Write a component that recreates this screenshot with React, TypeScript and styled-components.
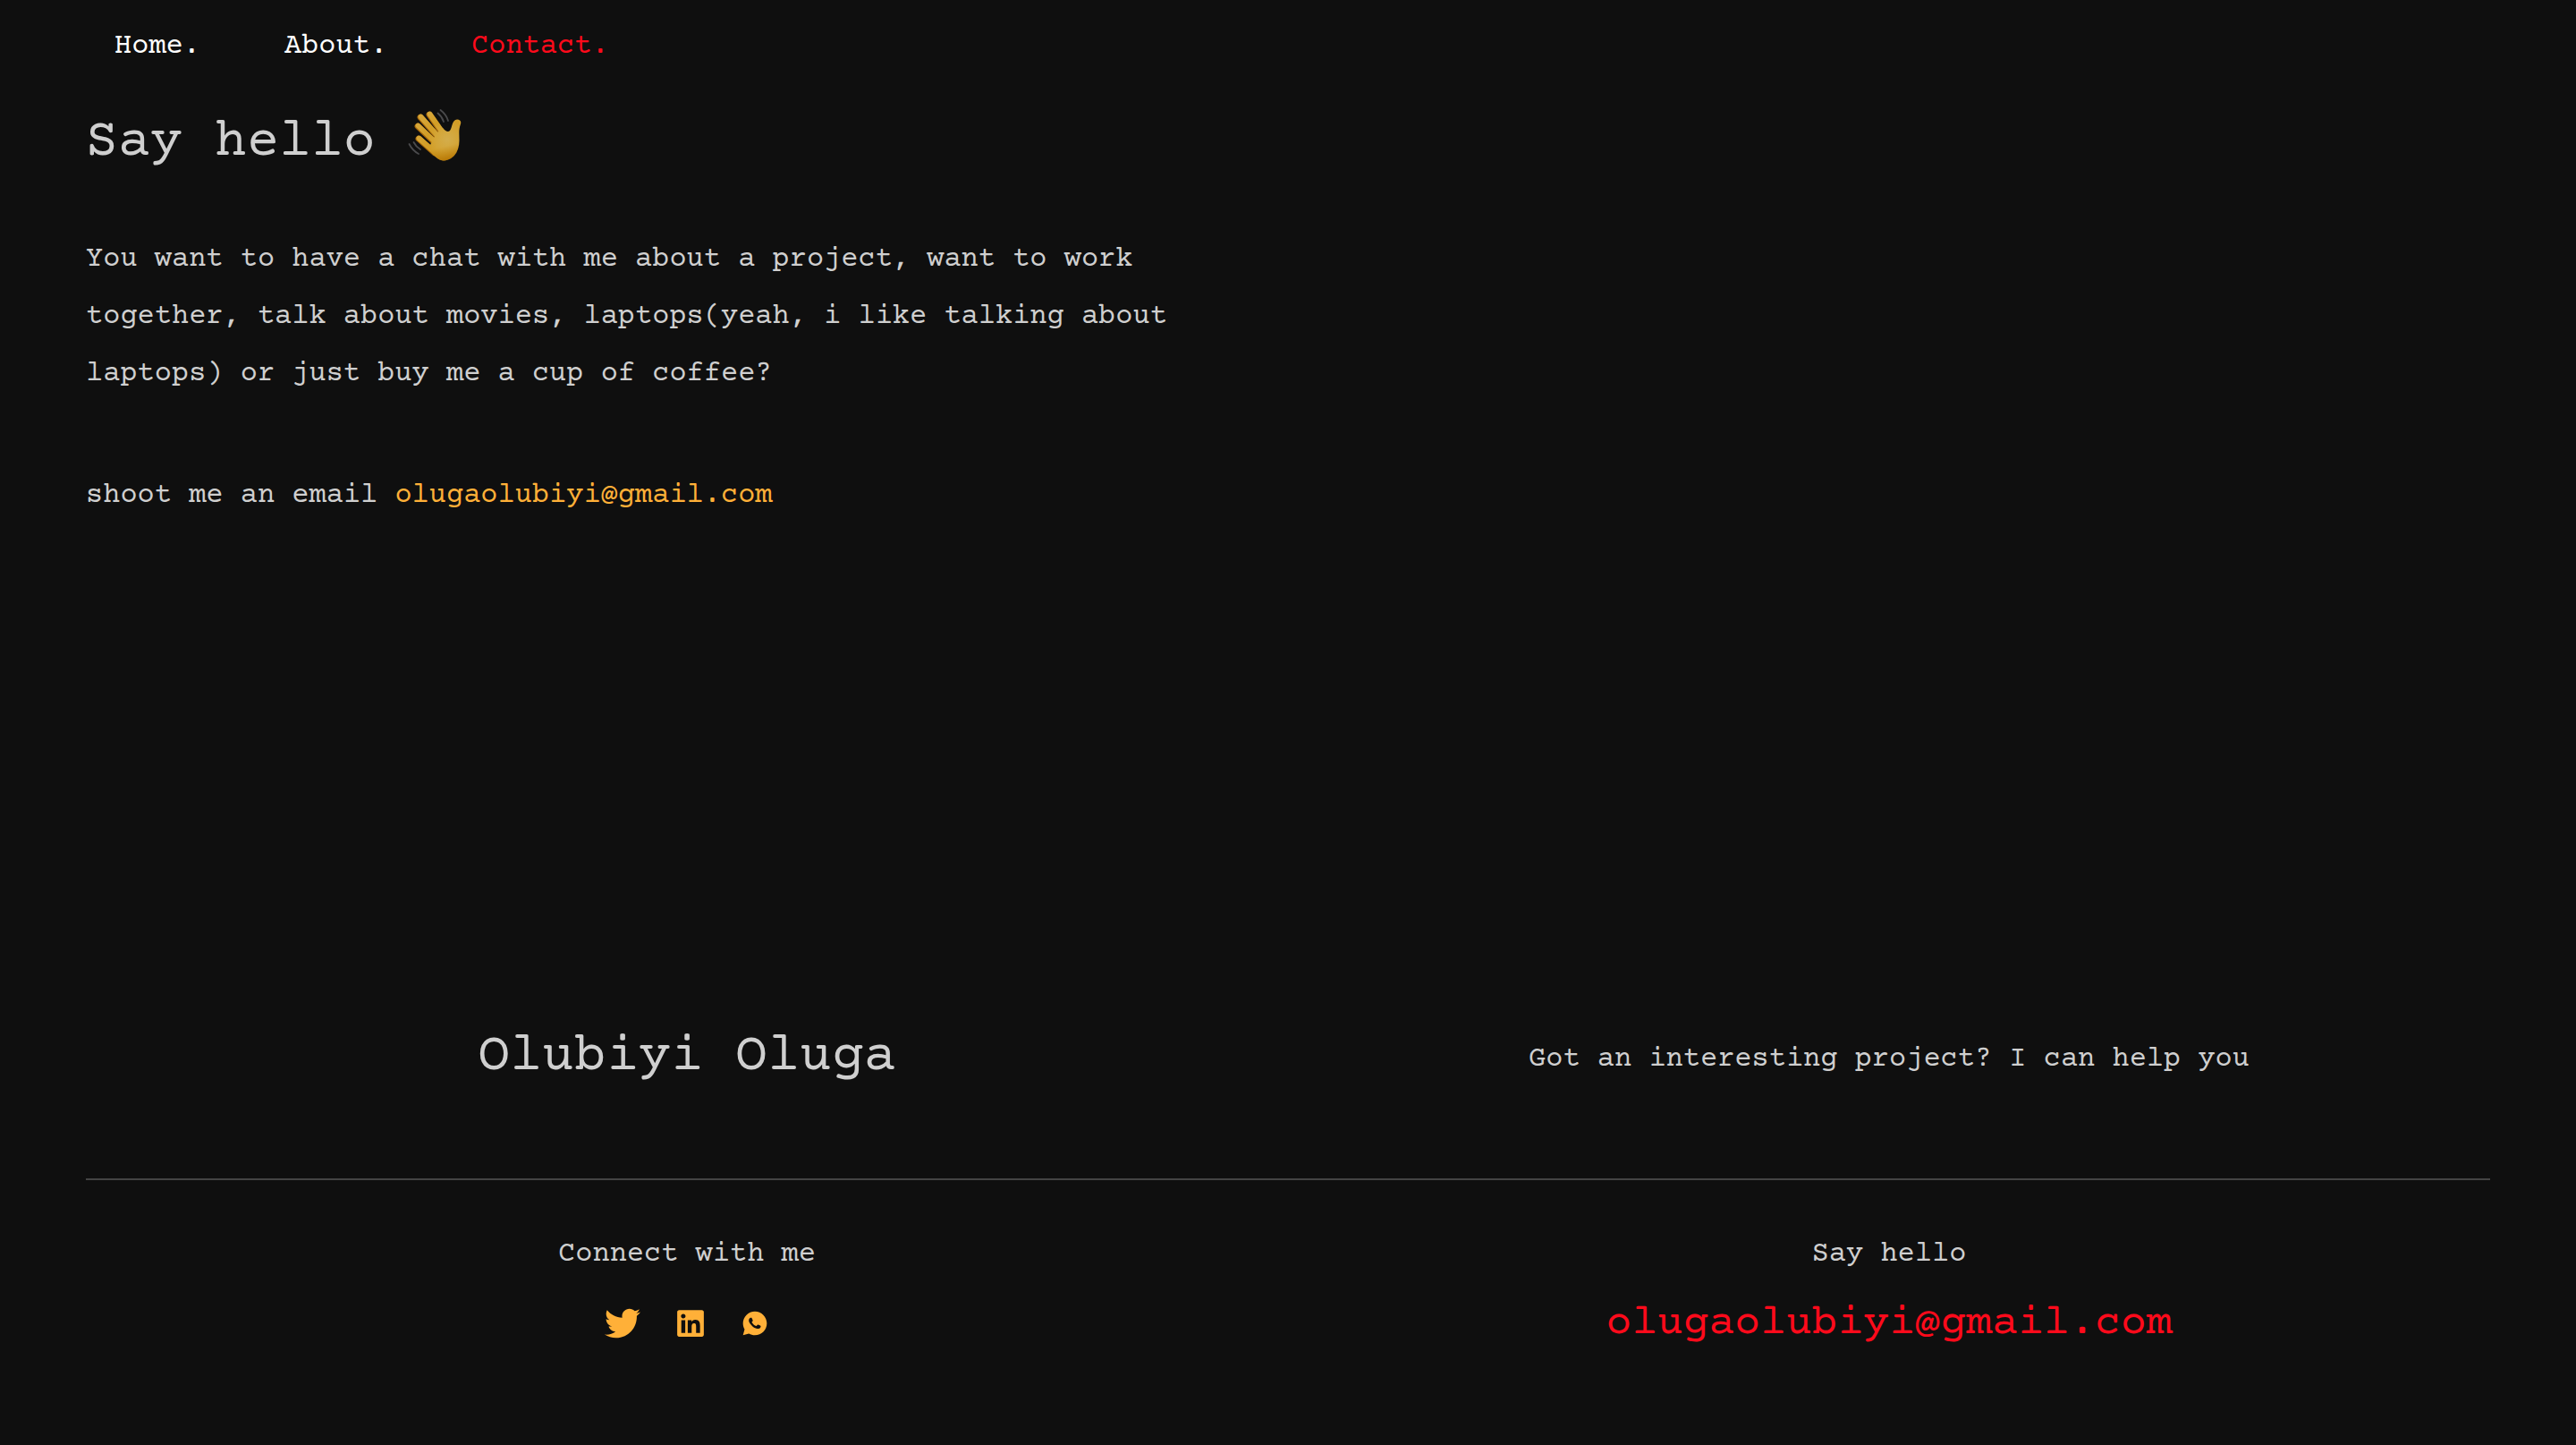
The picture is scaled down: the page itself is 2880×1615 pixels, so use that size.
import React from "react";
import styled, { createGlobalStyle } from "styled-components";
import { FaTwitter, FaLinkedin } from "react-icons/fa";
import { RiWhatsappFill } from "react-icons/ri";

const GlobalStyle = createGlobalStyle`
  *, *::before, *::after { box-sizing: border-box; }
  body {
    margin: 0;
    background: #0f0f0f;
    color: #cfcfcf;
    font-family: "Courier Prime", "Liberation Mono", monospace;
    font-size: 32px;
    line-height: 36px;
  }
  h1, h2, p { margin: 0; padding: 0; font-weight: 400; }
  a { text-decoration: none; }
`;

const Page = styled.div`
  min-height: 100vh;
  padding: 0 96px;
  display: flex;
  flex-direction: column;
`;

const Nav = styled.nav`
  display: flex;
  flex-wrap: wrap;
  gap: 94px;
  padding: 34px 32px 32px;
`;

const NavLink = styled.a<{ $active?: boolean }>`
  color: ${(p) => (p.$active ? "#ff0a1b" : "#ffffff")};
`;

const Main = styled.main`
  display: flex;
  flex-direction: column;
  padding-top: 18px;
  max-width: 1344px;
`;

const Title = styled.h1`
  font-size: 60px;
  line-height: 80px;
  display: flex;
  align-items: flex-start;
  gap: 36px;
`;

const Intro = styled.p`
  line-height: 64px;
  padding: 58px 80px 72px 0;
`;

const Line = styled.p`
  line-height: 64px;
`;

const Mail = styled.a`
  color: #ffb038;
`;

const Footer = styled.footer`
  margin-top: auto;
  padding-bottom: 109px;
`;

const Columns = styled.div`
  display: grid;
  grid-template-columns: 1fr 1fr;
  justify-items: center;
  align-items: center;
`;

const Top = styled(Columns)`
  padding-bottom: 99px;
  border-bottom: 2px solid #444444;
`;

const Bottom = styled(Columns)`
  padding-top: 65px;
`;

const Name = styled.h2`
  font-size: 60px;
  line-height: 72px;
`;

const Tagline = styled.p`
  padding-top: 4px;
`;

const Contact = styled.div`
  display: flex;
  flex-direction: column;
  align-items: center;
  gap: 32px;
`;

const BigMail = styled.a`
  color: #ff0a1b;
  font-size: 48px;
  line-height: 54px;
`;

const Socials = styled.div`
  display: flex;
  align-items: center;
  gap: 39px;
  height: 54px;
`;

const Social = styled.a`
  color: #ffb038;
  display: flex;
`;

function WavingHand() {
  return (
    <svg width="64" height="60" viewBox="0 4 64 60" role="img" aria-label="Waving hand">
      <defs>
        <radialGradient id="skin" gradientUnits="userSpaceOnUse" cx="44" cy="40" r="34">
          <stop offset="0" stopColor="#d3ad4c" />
          <stop offset="0.4" stopColor="#d4a536" />
          <stop offset="0.65" stopColor="#d29d25" />
          <stop offset="1" stopColor="#d6a637" />
        </radialGradient>
        <linearGradient id="shade" gradientUnits="userSpaceOnUse" x1="40" y1="48" x2="44" y2="64">
          <stop offset="0" stopColor="#b87700" stopOpacity="0" />
          <stop offset="1" stopColor="#b06f00" stopOpacity="0.85" />
        </linearGradient>
      </defs>
      <g fill="none" stroke="#a8690a" strokeLinecap="round">
        <path d="M12 39 L30 55" strokeWidth="6.8" />
        <path d="M11 25 L34 47" strokeWidth="6.8" />
        <path d="M14 15 L36 40" strokeWidth="6.8" />
        <path d="M24 12 L42 38" strokeWidth="6.8" />
      </g>
      <g fill="none" stroke="url(#skin)" strokeLinecap="round">
        <path d="M12.5 38.5 L30 54" strokeWidth="5.8" />
        <path d="M11.5 24.5 L34 46" strokeWidth="5.8" />
        <path d="M14.5 14.5 L37 40" strokeWidth="5.8" />
        <path d="M24.5 11.5 L43 38" strokeWidth="5.8" />
      </g>
      <path
        d="M25 46 L29 38 L34 31 L39 27 Q44 33 47 30 C50 26 49 18 55 17.5 C58 17.5 60 19.5 59 22.5 C56.5 29 57.5 34 57.5 41 C57.5 53 51 63 40 63.5 C35 63.5 31 60 24 52 Z"
        fill="url(#skin)"
      />
      <path
        d="M57.5 42 C57.5 53 51 63 40 63.5 C35 63.5 31 60 25 53 L34 46 Z"
        fill="url(#shade)"
      />
      <g fill="none" stroke="#4a4a4c" strokeWidth="1.8" strokeLinecap="round">
        <path d="M33.5 10.5 Q38 14 40 20" />
        <path d="M36.5 7 Q43 12 45 19" />
        <path d="M6.5 43 Q9 48 14 51" />
        <path d="M1.5 45 Q5 52 12 56" />
      </g>
    </svg>
  );
}

export default function App() {
  return (
    <>
      <GlobalStyle />
      <Page>
        <Nav>
          <NavLink href="#home">Home.</NavLink>
          <NavLink href="#about">About.</NavLink>
          <NavLink href="#contact" $active aria-current="page">Contact.</NavLink>
        </Nav>
        <Main>
          <Title>
            Say hello
            <WavingHand />
          </Title>
          <Intro>
            You want to have a chat with me about a project, want to work together, talk about movies,
            laptops(yeah, i like talking about laptops) or just buy me a cup of coffee?
          </Intro>
          <Line>
            shoot me an email <Mail href="mailto:olugaolubiyi@gmail.com">olugaolubiyi@gmail.com</Mail>
          </Line>
        </Main>
        <Footer>
          <Top>
            <Name>Olubiyi Oluga</Name>
            <Tagline>Got an interesting project? I can help you</Tagline>
          </Top>
          <Bottom>
            <Contact>
              <p>Connect with me</p>
              <Socials>
                <Social href="#twitter" aria-label="Twitter"><FaTwitter size={40} /></Social>
                <Social href="#linkedin" aria-label="LinkedIn"><FaLinkedin size={34} /></Social>
                <Social href="#whatsapp" aria-label="WhatsApp"><RiWhatsappFill size={32} /></Social>
              </Socials>
            </Contact>
            <Contact>
              <p>Say hello</p>
              <BigMail href="mailto:olugaolubiyi@gmail.com">olugaolubiyi@gmail.com</BigMail>
            </Contact>
          </Bottom>
        </Footer>
      </Page>
    </>
  );
}
